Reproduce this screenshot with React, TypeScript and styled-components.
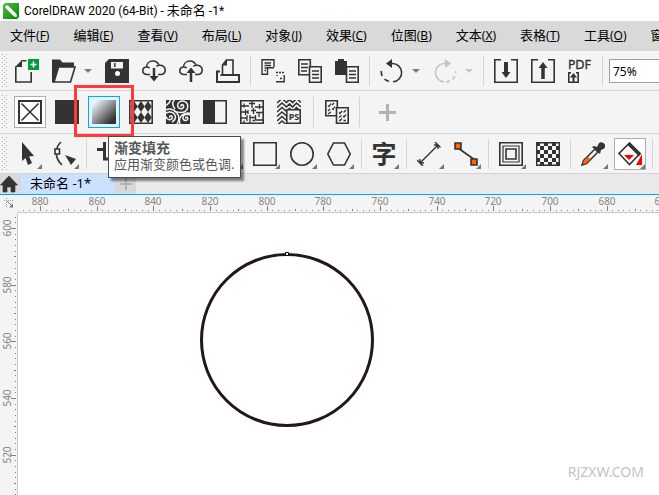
import React, { ReactNode } from "react";
import styled, { createGlobalStyle, css } from "styled-components";

const ink = "#333333";
const panel = "#f4f4f4";
const line = "#d4d4d4";
const accent = "#00a8ff";
const uiFont = `"Noto Sans", "Noto Sans CJK SC", sans-serif`;

const GlobalStyle = createGlobalStyle`
  *, *::before, *::after { box-sizing: border-box; }
  body { margin: 0; background: #fff; font-family: ${uiFont}; color: #000; overflow: hidden; }
  button, input { font-family: inherit; }
`;

const Window = styled.div`
  display: flex;
  flex-direction: column;
  height: 100vh;
  overflow: hidden;
`;

const TitleBar = styled.header`
  display: flex;
  align-items: center;
  gap: 5px;
  height: 21px;
  padding-left: 3px;
  flex: none;
  background: #fff;
`;

const Title = styled.h1`
  margin: 0;
  font-family: Roboto, "Noto Sans CJK SC", sans-serif;
  font-size: 12px;
  line-height: 20px;
  font-weight: 400;
  white-space: pre;
  span { font-size: 13px; }
`;

const MenuBar = styled.nav`
  display: flex;
  flex: none;
  height: 30px;
  padding-left: 10px;
  gap: 24px;
  background: #d9d9d9;
`;

const MenuItem = styled.button`
  flex: none;
  padding: 0 0 2px;
  border: 0;
  background: none;
  color: #000;
  font-size: 13px;
  line-height: 28px;
  white-space: nowrap;
`;

const Mnemonic = styled.span`
  font-size: 12px;
`;

const Toolbar = styled.div<{ $tall?: boolean; $indent?: number }>`
  display: flex;
  flex: none;
  gap: 5px;
  padding: ${(p) => (p.$tall ? "5px 0 5px" : "4px 0 3px")};
  background: ${panel};
  border-bottom: 1px solid ${line};
  &::before {
    content: "";
    flex: none;
    width: 6px;
    margin: -1px ${(p) => p.$indent ?? -1}px -1px 1px;
    background-image: conic-gradient(from 270deg at 1px 1px, #b0b0b0 90deg, transparent 0),
      conic-gradient(from 270deg at 1px 1px, #b0b0b0 90deg, transparent 0);
    background-size: 4px 4px;
    background-position: 1px 0, 3px 2px;
  }
`;

const Tool = styled.button<{ $framed?: boolean; $active?: boolean; $wide?: boolean }>`
  position: relative;
  display: flex;
  align-items: center;
  justify-content: center;
  flex: none;
  width: ${(p) => (p.$wide ? 42 : 32)}px;
  height: 32px;
  padding: 0;
  border: 1px solid transparent;
  background: none;
  ${(p) => p.$framed && css`border-color: #adadad; background: #fff;`}
  ${(p) => p.$active && css`border-color: ${accent}; background: #e4f3ff;`}
`;

const Flyout = styled.span`
  position: absolute;
  right: 0;
  bottom: 0;
  width: 5px;
  height: 5px;
  background: #777;
  clip-path: polygon(100% 0, 100% 100%, 0 100%);
`;

const Caret = styled.button<{ $muted?: boolean }>`
  display: flex;
  align-items: center;
  justify-content: center;
  flex: none;
  width: 16px;
  margin: 0 0 0 -5px;
  padding: 0;
  border: 0;
  background: none;
  color: ${(p) => (p.$muted ? "#c8c8c8" : "#808080")};
`;

const Divider = styled.span<{ $wide?: boolean }>`
  flex: none;
  width: ${(p) => (p.$wide ? 6 : 3)}px;
  height: 30px;
  margin-top: 1px;
  background: linear-gradient(${line}, ${line}) center / 1px 100% no-repeat;
`;

const ZoomBox = styled.input`
  flex: none;
  width: 80px;
  height: 24px;
  margin-top: 4px;
  padding: 0 3px;
  border: 1px solid #a0a0a0;
  border-radius: 0;
  background: #fff;
  font-size: 12px;
`;

const ToolAnchor = styled.div`
  position: relative;
  flex: none;
`;

const Marker = styled.div`
  position: absolute;
  z-index: 2;
  left: -14px;
  top: -11px;
  width: 60px;
  height: 52px;
  border: 3px solid #ff3a3a;
  pointer-events: none;
`;

const Tooltip = styled.div`
  position: absolute;
  z-index: 3;
  left: 20px;
  top: 40px;
  padding: 2px 6px 5px 5px;
  border: 1px solid #4c4c4c;
  background: #fff;
  box-shadow: 3px 3px 2px rgba(0, 0, 0, 0.45);
  color: #575757;
  font-size: 13px;
  line-height: 16px;
  white-space: nowrap;
  strong { display: block; font-size: 14px; line-height: 17px; }
`;

const TabBar = styled.div`
  display: flex;
  flex: none;
  height: 21px;
  background: #e9e9e9;
  border-bottom: 1px solid ${accent};
`;

const Tab = styled.button<{ $kind: "home" | "document" | "add" }>`
  display: flex;
  align-items: center;
  justify-content: ${(p) => (p.$kind === "document" ? "flex-start" : "center")};
  flex: none;
  width: ${(p) => (p.$kind === "document" ? 94 : 21)}px;
  padding: ${(p) => (p.$kind === "document" ? "0 0 2px 9px" : "0")};
  border: 0;
  background: ${(p) => (p.$kind === "document" ? "#cce0ff" : "#d9d9d9")};
  color: #000;
  font-size: 13px;
  line-height: 18px;
  white-space: pre;
  ${(p) => p.$kind === "home" && css`padding-right: 3px;`}
`;

const Workspace = styled.main`
  display: grid;
  flex: 1;
  min-height: 0;
  grid-template: 18px 1fr / 18px 1fr;
  background: ${panel};
`;

const Corner = styled.div`
  padding: 3px 0 0 4px;
  line-height: 0;
`;

const RulerStrip = styled.div<{ $side?: boolean }>`
  overflow: hidden;
  line-height: 0;
  border: 0 solid #c9c9c9;
  border-width: ${(p) => (p.$side ? "0 1px 0 0" : "0 0 1px 0")};
  text { font-size: 10px; fill: #858585; text-anchor: middle; }
`;

const Canvas = styled.section`
  position: relative;
  overflow: hidden;
  background: #fff;
`;

const Shape = styled.svg`
  position: absolute;
  left: 182px;
  top: 38px;
`;

const Watermark = styled.span`
  position: absolute;
  right: 15px;
  bottom: 13px;
  color: #c4c4c4;
  font-size: 14px;
  line-height: 20px;
`;

const Icon = ({ children, w = 24, h = 24 }: { children: ReactNode; w?: number; h?: number }) => (
  <svg width={w} height={h} viewBox={`0 0 ${w} ${h}`} fill="none" stroke={ink} strokeWidth="1.6" aria-hidden="true">
    {children}
  </svg>
);

const Down = () => (
  <Icon w={8} h={5}><path d="M0 0h8L4 4z" fill="currentColor" stroke="none" /></Icon>
);

const cloud = "M8 15.5H4.5C2.2 15.2 .8 13.8 .8 11.8c0-2.2 1.5-3.6 3.6-3.8C4.6 4.600 7.300 2 10.900 2c3 0 5.200 1.700 6.200 4.300 3.500-.3 6.100 1.500 6.100 4.600 0 2.700-1.900 4.500-4.700 4.600H16M4.400 8c1.400-.1 2.400.3 3.200 1.100M17.100 6.300c-1.200.1-2 .5-2.700 1.200";

const NewIcon = () => (
  <Icon>
    <path d="M.8 7.500V23H16.200V13M11.500 1.800H6.500" />
    <path d="M0 8L7 1v7z" fill={ink} stroke="none" />
    <path d="M13 0h11v11H13z" fill="#009b3a" stroke="none" />
    <path d="M18.500 2.500v6M15.500 5.500h6" stroke="#fff" />
  </Icon>
);
const OpenIcon = () => (
  <Icon>
    <path d="M0 .5h8l2.500 3H22V8H6L2 23.500H0z" fill={ink} stroke="none" />
    <path d="M6.500 8H23l-4.500 15H2z" fill={panel} />
  </Icon>
);
const SaveIcon = () => (
  <Icon>
    <path d="M4 0h20v24H0V4z" fill={ink} stroke="none" />
    <path d="M6 3h12v6.500H6z" fill={panel} stroke="none" />
    <path d="M9.800 4v4" strokeWidth="1.500" />
    <circle cx="12.500" cy="14.500" r="2.500" fill="#fff" stroke="none" />
  </Icon>
);
const CloudDownIcon = () => (
  <Icon><path d={cloud} /><path d="M12 9v10" strokeWidth="2.500" /><path d="M7.500 17h9L12 22.500z" fill={ink} stroke="none" /></Icon>
);
const CloudUpIcon = () => (
  <Icon><path d={cloud} /><path d="M12 12v11" strokeWidth="2.500" /><path d="M7.500 14h9L12 8.500z" fill={ink} stroke="none" /></Icon>
);
const PrintIcon = () => (
  <Icon>
    <path d="M6.500 15.500V6L10.500 1H17v14.500" /><path d="M6 6.500L11 .5v6z" fill={ink} stroke="none" />
    <path d="M4 12.500H1V23h22v-7H4.500" strokeWidth="2" />
  </Icon>
);
const CutIcon = () => (
  <Icon>
    <path d="M1 .8h12v7.500M13 8.800H6.500v6.400H1V0M3.500 4H10M3.500 6.500H10M3.500 9H6M3.500 11.500H5" strokeWidth="1.400" />
    <path d="M15 13.500h9M16 16v1M19 19.500h3" strokeDasharray="2 1" strokeWidth="1.400" />
    <path d="M15 22.800h8.200V16" strokeWidth="1.400" />
  </Icon>
);
const CopyIcon = () => (
  <Icon>
    <path d="M.8 .8h11.500v15H.8zM3 5h7M3 8.500h7M3 12h6" />
    <path d="M11.500 7.800h11.700v15.400H11.500z" fill={panel} /><path d="M14 12h7M14 15.500h7M14 19h7" />
  </Icon>
);
const PasteIcon = () => (
  <Icon>
    <path d="M0 2h3V0h6v2h3v14H0z" fill={ink} stroke="none" />
    <path d="M11.500 7.800h11.700v15.400H11.500z" fill={panel} /><path d="M14 12h7M14 15.500h7M14 19h7" />
  </Icon>
);
const UndoIcon = () => (
  <Icon>
    <path d="M10 4.500h2a9 9 0 0 1 1 18.300" /><path d="M9 22.300A10 10 0 0 1 1.200 12" strokeDasharray="5 4" />
    <path d="M6 4.500L12 0v9z" fill={ink} stroke="none" />
  </Icon>
);
const RedoIcon = () => (
  <Icon>
    <g stroke="#c4c4c4">
      <path d="M14 4.500h-2a9 9 0 0 0-1 18.300" /><path d="M13 22.800A10 10 0 0 0 22.800 12" strokeDasharray="4 3" />
      <path d="M18 4.500L12 0v9z" fill="#c4c4c4" stroke="none" />
    </g>
  </Icon>
);
const ImportIcon = () => (
  <Icon><path d="M7 .8H.8v22.400h22.400V.8H17" /><path d="M12 3v12" strokeWidth="4" /><path d="M7.500 13h9L12 19z" fill={ink} stroke="none" /></Icon>
);
const ExportIcon = () => (
  <Icon><path d="M7 .8H.8v22.400h22.400V.8H17" /><path d="M12 8v12" strokeWidth="3.500" /><path d="M7.500 9h9L12 3z" fill={ink} stroke="none" /></Icon>
);
const PdfIcon = () => (
  <Icon>
    <text x="0" y="10" fontSize="12" fontFamily="DejaVu Sans, sans-serif" fill={ink} stroke={ink} strokeWidth=".3">PDF</text>
    <path d="M3 13.800H.8v9.400h9.400v-9.400H8" /><path d="M5.500 17v6" strokeWidth="2" /><path d="M2 18.500h7L5.500 14z" fill={ink} stroke="none" />
  </Icon>
);

const NoFillIcon = () => <Icon><path d="M1 1h22v22H1z" strokeWidth="2" /><path d="M3.500 3.500l17 17M20.500 3.500l-17 17" /></Icon>;
const SolidIcon = () => <Icon><path d="M0 0h24v24H0z" fill={ink} stroke="none" /></Icon>;
const GradientIcon = () => (
  <Icon>
    <defs><linearGradient id="fountain" x1="0" y1="0" x2="1" y2="1">
      <stop offset=".1" stopColor="#eaf5ff" /><stop offset=".5" stopColor="#8d8f91" /><stop offset=".85" stopColor="#333" />
    </linearGradient></defs>
    <path d="M0 0h24v24H0z" fill="url(#fountain)" stroke="none" />
  </Icon>
);
const HarlequinIcon = () => (
  <Icon>
    {[5, 12, 19].map((x) => [1, 12].map((y) => (
      <path key={`${x}-${y}`} d={`M${x} ${y}l3.700 5.500L${x} ${y + 11}l-3.700-5.500z`} fill={ink} stroke="none" />
    )))}
    <path d="M.8 .8h22.400v22.400H.8z" />
  </Icon>
);
const SwirlIcon = () => (
  <Icon>
    <path d="M0 0h24v24H0z" fill={ink} stroke="none" />
    <g stroke="#f4f4f4" strokeWidth="1.500">
      <path d="M15 6.500c-.6-1.700 1.500-2.500 2.300-1.200 1 1.700-.5 3.700-2.600 3.500-2.700-.2-3.800-3.300-2.400-5.600C14 .5 18 .2 20.200 2.400c2.400 2.500 2 7-1 9-3 2-7.500 1-11 0M8.500 0C6 2 6 5 9 9" />
      <path d="M4 17.500c-1-1 .7-2.600 1.800-1.200 1.300 1.800-.9 4-3 3.300-1.500-.5-2.300-1.600-2.800-3M0 13.500c2.500-2.400 7-1.800 8.700 1.200 1.500 2.700.3 6-2.700 7.300M0 10C3 8 8 9 11 13s2 8 0 11M0 5.500C2 4 4 3 4.500 0" />
      <path d="M20 18.500c-.8-.7.300-2 1.300-1.100 1.200 1.300-.3 3.500-2.400 3-2.400-.6-2.600-3.800-.7-5.200 1.600-1.200 3.800-1.200 5.800 0M14 24c-1.500-5 .5-9 5-10.500 1.800-.6 3.500-.6 5-.2" />
    </g>
  </Icon>
);
const TwoColorIcon = () => <Icon><path d="M0 0h12v24H0z" fill={ink} stroke="none" /><path d="M.8 .8h22.400v22.400H.8z" /></Icon>;
const TextureIcon = () => (
  <Icon>
    <path d="M.8 .8h22.400v22.400H.8z" />
    <path d="M4 3.500v4M1 6h8M12 1v7M9 3.500h6M15 7h8M19.500 4v5M1 12h7M5.500 9.500V15M8 10v4M11 10.500h5M13.500 8v6M16 12.500h7M19 12v5M1 18h6M7 15v6M10 15v8M10 17.500h6M15.500 15v5M16 20h7M4 20.500v3M12.500 20.500h3" strokeWidth="1.300" />
  </Icon>
);
const PostScriptIcon = () => (
  <Icon>
    {[-1, 3.500, 8, 12.500, 17, 21.500].map((y) => (
      <path key={y} d={`M0 ${y + 4}l5-4.500 4.500 4 3-3 3 3 4-4 4.500 4`} strokeWidth="1.600" />
    ))}
    <path d="M9.800 9.800h13.400v13.400H9.800z" fill={panel} />
    <text x="17" y="20" fontSize="9" fontWeight="700" textAnchor="middle" fontFamily="Noto Sans, sans-serif" fill={ink} stroke="none">PS</text>
  </Icon>
);
const CopyFillIcon = () => (
  <Icon>
    <path d="M.8 .8h11.500v15H.8z" />
    <path d="M3 5.500l1 1 2-3M7 5l2-2M3 11l2-2M7 8.500l1 1 2-3M3 14l3-2" strokeWidth="1.300" />
    <path d="M11.500 7.800h11.700v15.400H11.500z" fill={panel} />
    <path d="M14 12.500l1 1 2-2.500M18.500 12.500l2.500-2.500M14 17.500l2.500-2M18 16l1 1 2-2.500M14 20.500h1l2-2M18.500 20.500h2.500" strokeWidth="1.300" />
  </Icon>
);
const PlusIcon = ({ size = 17 }: { size?: number }) => (
  <Icon w={size} h={size}><path d={`M${size / 2} 0v${size}M0 ${size / 2}h${size}`} stroke="#b2b2b2" strokeWidth={size > 14 ? 3 : 2} /></Icon>
);

const PickIcon = () => <Icon><path d="M7 0l12 14-5 .5L17 21l-4 2-2.500-7L7 19z" fill={ink} stroke="none" /></Icon>;
const NodeIcon = () => (
  <Icon>
    <path d="M9 0C2.500 6 2.500 16 10 23" />
    <path d="M3 7h4.500v5H3z" fill={panel} /><path d="M13 13l11 4-5 6z" fill={ink} stroke="none" />
  </Icon>
);
const CropIcon = () => <Icon><path d="M7.500 0v17H24M0 7.500h6M11 7.500h6V24" strokeWidth="3" /></Icon>;
const ZoomIcon = () => <Icon><circle cx="10" cy="10" r="8" /><path d="M16 16l7 7" strokeWidth="3" /></Icon>;
const CurveIcon = () => <Icon><path d="M2 22C2 5 20 20 22 2" /></Icon>;
const BrushIcon = () => <Icon><path d="M3 20C10 18 14 10 22 2" strokeWidth="3" /></Icon>;
const RectIcon = () => <Icon><path d="M.8 .8h22.400v22.400H.8z" /></Icon>;
const EllipseIcon = () => <Icon><circle cx="12" cy="12" r="11.200" /></Icon>;
const PolygonIcon = () => <Icon><path d="M6.500 1h11L23.200 12l-5.700 11h-11L.8 12z" /></Icon>;
const TextIcon = () => (
  <Icon><text x="12" y="21" fontSize="25" fontWeight="700" textAnchor="middle" fontFamily="Noto Sans CJK SC, sans-serif" fill={ink} stroke="none">字</text></Icon>
);
const DimensionIcon = () => <Icon><path d="M3 21L21 3M0 18l6 6M18 0l5.500 5.500M3 21v-4M3 21h4M21 3h-4M21 3v4" strokeWidth="1.400" /></Icon>;
const ConnectorIcon = () => (
  <Icon><path d="M4 6l17 12" /><path d="M1 1h6v6H1zM17 17h6v6h-6z" fill="#ff6600" /></Icon>
);
const ContourIcon = () => (
  <Icon><path d="M.8 .8h22.400v22.400H.8z" /><path d="M4 4h16v16H4z" strokeWidth="1.200" /><path d="M7 7h10v10H7z" /></Icon>
);
const CheckerIcon = () => (
  <Icon>
    {[0, 1, 2, 3, 4, 5].map((r) => [0, 1, 2, 3, 4, 5].map((c) => (r + c) % 2 === 0 && (
      <rect key={`${r}-${c}`} x={c * 4} y={r * 4} width="4" height="4" fill={ink} stroke="none" />
    )))}
    <path d="M.7 .7h22.600v22.600H.7z" strokeWidth="1.400" />
  </Icon>
);
const DropperIcon = () => (
  <Icon>
    <path d="M1 23l1.500-4.500L14 7l3 3L5.500 21.500z" strokeWidth="1.500" />
    <path d="M2 22l1-3.500 4-4 2.500 2.500-4.500 4.500z" fill="#ff6600" stroke="none" />
    <path d="M13 4l3 1 2-4c2-2 7 0 6 4-.4 2-2.500 2.500-4 3l-1 4-8-7z" fill={ink} stroke="none" />
  </Icon>
);
const FillIcon = () => (
  <Icon>
    <path d="M11.500 1L22 11.500 11.500 22.500 1 11.500z" /><path d="M11.500 0L23 11.500l-2 3L9.500 3z" fill={ink} stroke="none" />
    <path d="M6 13h10l-5 5z" fill="#f00" stroke="none" /><path d="M24 12v11h-6z" fill="#f00" stroke="none" />
  </Icon>
);
const HomeIcon = () => <Icon w={18} h={18}><path d="M9 1l8.500 9H15v7h-4v-5H7v5H3v-7H.5z" fill={ink} stroke={ink} strokeWidth=".6" /></Icon>;

type Entry = { name: string; icon?: ReactNode; flyout?: boolean; framed?: boolean; wide?: boolean } | "|" | "||";

const Entries = ({ items }: { items: Entry[] }) => (
  <>
    {items.map((it, i) =>
      typeof it === "string" ? (
        <Divider key={i} $wide={it === "||"} />
      ) : (
        <Tool key={i} type="button" aria-label={it.name} $framed={it.framed} $wide={it.wide}>
          {it.icon}
          {it.flyout && <Flyout />}
        </Tool>
      )
    )}
  </>
);

const menus = [
  ["文件", "F"], ["编辑", "E"], ["查看", "V"], ["布局", "L"], ["对象", "J"], ["效果", "C"],
  ["位图", "B"], ["文本", "X"], ["表格", "T"], ["工具", "O"], ["窗口", "W"],
];

const toolbox: Entry[] = [
  { name: "选择", icon: <PickIcon />, flyout: true },
  { name: "形状", icon: <NodeIcon />, flyout: true },
  "|",
  { name: "裁剪", icon: <CropIcon />, flyout: true },
  { name: "缩放", icon: <ZoomIcon />, flyout: true },
  "|",
  { name: "手绘", icon: <CurveIcon />, flyout: true },
  { name: "艺术笔", icon: <BrushIcon />, flyout: true },
  { name: "矩形", icon: <RectIcon />, flyout: true },
  { name: "椭圆形", icon: <EllipseIcon />, flyout: true },
  { name: "多边形", icon: <PolygonIcon />, flyout: true },
  "|",
  { name: "文本", icon: <TextIcon />, flyout: true },
  "|",
  { name: "度量", icon: <DimensionIcon />, flyout: true },
  { name: "连接器", icon: <ConnectorIcon />, flyout: true },
  "|",
  { name: "轮廓图", icon: <ContourIcon />, flyout: true },
  { name: "透明度", icon: <CheckerIcon /> },
  "|",
  { name: "颜色滴管", icon: <DropperIcon />, flyout: true },
  { name: "交互式填充", icon: <FillIcon />, flyout: true, framed: true },
  "|",
];

/* Distance between two labelled marks, which are 20 units apart. */
const STEP = 56.65;
const Ruler = ({ first, origin, count, side }: { first: number; origin: number; count: number; side?: boolean }) => {
  const length = Math.round(STEP * count + origin);
  const marks: ReactNode[] = [];
  for (let i = -10; i < count * 10; i++) {
    const at = Math.round(origin + (i * STEP) / 10);
    if (at < 4) continue;
    const size = i % 10 === 0 ? 5 : i % 5 === 0 ? 2 : 1;
    const from = 16 - size;
    marks.push(
      side
        ? <rect key={i} x={from} y={at} width={size} height="1" />
        : <rect key={i} x={at} y={from} width="1" height={size} />
    );
  }
  return (
    <svg width={side ? 17 : length} height={side ? length : 17} fill="#808080" aria-hidden="true">
      {marks}
      {Array.from({ length: count }, (_, k) => {
        const at = Math.round(origin + k * STEP);
        return side
          ? <text key={k} x="0" y="0" transform={`translate(11 ${at}) rotate(-90)`}>{first - k * 20}</text>
          : <text key={k} x={at} y="10">{first - k * 20}</text>;
      })}
    </svg>
  );
};

export default function App() {
  return (
    <Window>
      <GlobalStyle />
      <TitleBar>
        <Icon w={16} h={16}>
          <defs><linearGradient id="brand" x1="0" y1="0" x2="1" y2="1"><stop stopColor="#55b948" /><stop offset="1" stopColor="#008a00" /></linearGradient></defs>
          <path d="M2 0h14v14l-2 2H0V2z" fill="url(#brand)" stroke="none" />
          <path d="M4 4l8 8" stroke="#fff" strokeWidth="3.500" strokeLinecap="round" />
          <path d="M11 13l3 1-1-3z" fill="#d7efcf" stroke="none" />
        </Icon>
        <Title>CorelDRAW 2020 (64-Bit) - <span>未命名</span> -1*</Title>
      </TitleBar>
      <MenuBar>
        {menus.map(([name, key]) => (
          <MenuItem key={key} type="button">{name}<Mnemonic>(<u>{key}</u>)</Mnemonic></MenuItem>
        ))}
      </MenuBar>
      <Toolbar>
        <Entries items={[{ name: "新建", icon: <NewIcon /> }, { name: "打开", icon: <OpenIcon /> }]} />
        <Caret type="button" aria-label="最近打开"><Down /></Caret>
        <Entries items={[
          { name: "保存", icon: <SaveIcon /> }, { name: "从云中打开", icon: <CloudDownIcon /> },
          { name: "保存到云", icon: <CloudUpIcon /> }, { name: "打印", icon: <PrintIcon /> }, "|",
          { name: "剪切", icon: <CutIcon /> }, { name: "复制", icon: <CopyIcon /> }, { name: "粘贴", icon: <PasteIcon /> }, "|",
          { name: "撤消", icon: <UndoIcon /> },
        ]} />
        <Caret type="button" aria-label="撤消列表"><Down /></Caret>
        <Entries items={[{ name: "重做", icon: <RedoIcon /> }]} />
        <Caret type="button" aria-label="重做列表" $muted><Down /></Caret>
        <Entries items={["|", { name: "导入", icon: <ImportIcon /> }, { name: "导出", icon: <ExportIcon /> }, { name: "发布为 PDF", icon: <PdfIcon /> }, "|"]} />
        <ZoomBox aria-label="缩放级别" defaultValue="75%" />
      </Toolbar>
      <Toolbar $tall $indent={2}>
        <Entries items={[{ name: "无填充", icon: <NoFillIcon />, framed: true }, { name: "均匀填充", icon: <SolidIcon /> }]} />
        <ToolAnchor>
          <Tool type="button" $active aria-label="渐变填充" aria-describedby="fill-tip"><GradientIcon /></Tool>
          <Marker />
          <Tooltip role="tooltip" id="fill-tip"><strong>渐变填充</strong>应用渐变颜色或色调.</Tooltip>
        </ToolAnchor>
        <Entries items={[
          { name: "向量图样填充", icon: <HarlequinIcon /> }, { name: "位图图样填充", icon: <SwirlIcon /> },
          { name: "双色图样填充", icon: <TwoColorIcon /> }, { name: "底纹填充", icon: <TextureIcon /> },
          { name: "PostScript 填充", icon: <PostScriptIcon /> }, "||",
          { name: "复制填充", icon: <CopyFillIcon /> }, "|",
          { name: "添加", icon: <PlusIcon />, wide: true },
        ]} />
      </Toolbar>
      <Toolbar><Entries items={toolbox} /></Toolbar>
      <TabBar>
        <Tab type="button" $kind="home" aria-label="主页"><HomeIcon /></Tab>
        <Tab type="button" $kind="document">未命名 -1*</Tab>
        <Tab type="button" $kind="add" aria-label="新建文档"><PlusIcon size={12} /></Tab>
      </TabBar>
      <Workspace>
        <Corner>
          <Icon w={12} h={12}>
            <path d="M0 2.500h10M2.500 0v10" stroke="#999" strokeWidth="1" strokeDasharray="1 1" />
            <path d="M3 3l5 5" stroke="#777" strokeWidth="1" /><path d="M9 9.500V5.500L5 9.500z" fill="#777" stroke="none" />
          </Icon>
        </Corner>
        <RulerStrip><Ruler first={880} origin={22} count={24} /></RulerStrip>
        <RulerStrip $side><Ruler first={600} origin={15} count={14} side /></RulerStrip>
        <Canvas>
          <Shape width="174" height="178" viewBox="0 0 174 178" fill="none">
            <circle cx="87" cy="89" r="85.500" stroke="#231815" strokeWidth="3" />
            <path d="M85.500 1.500h3v3h-3z" fill="#fff" stroke="#000" />
          </Shape>
          <Watermark>RJZXW.COM</Watermark>
        </Canvas>
      </Workspace>
    </Window>
  );
}
